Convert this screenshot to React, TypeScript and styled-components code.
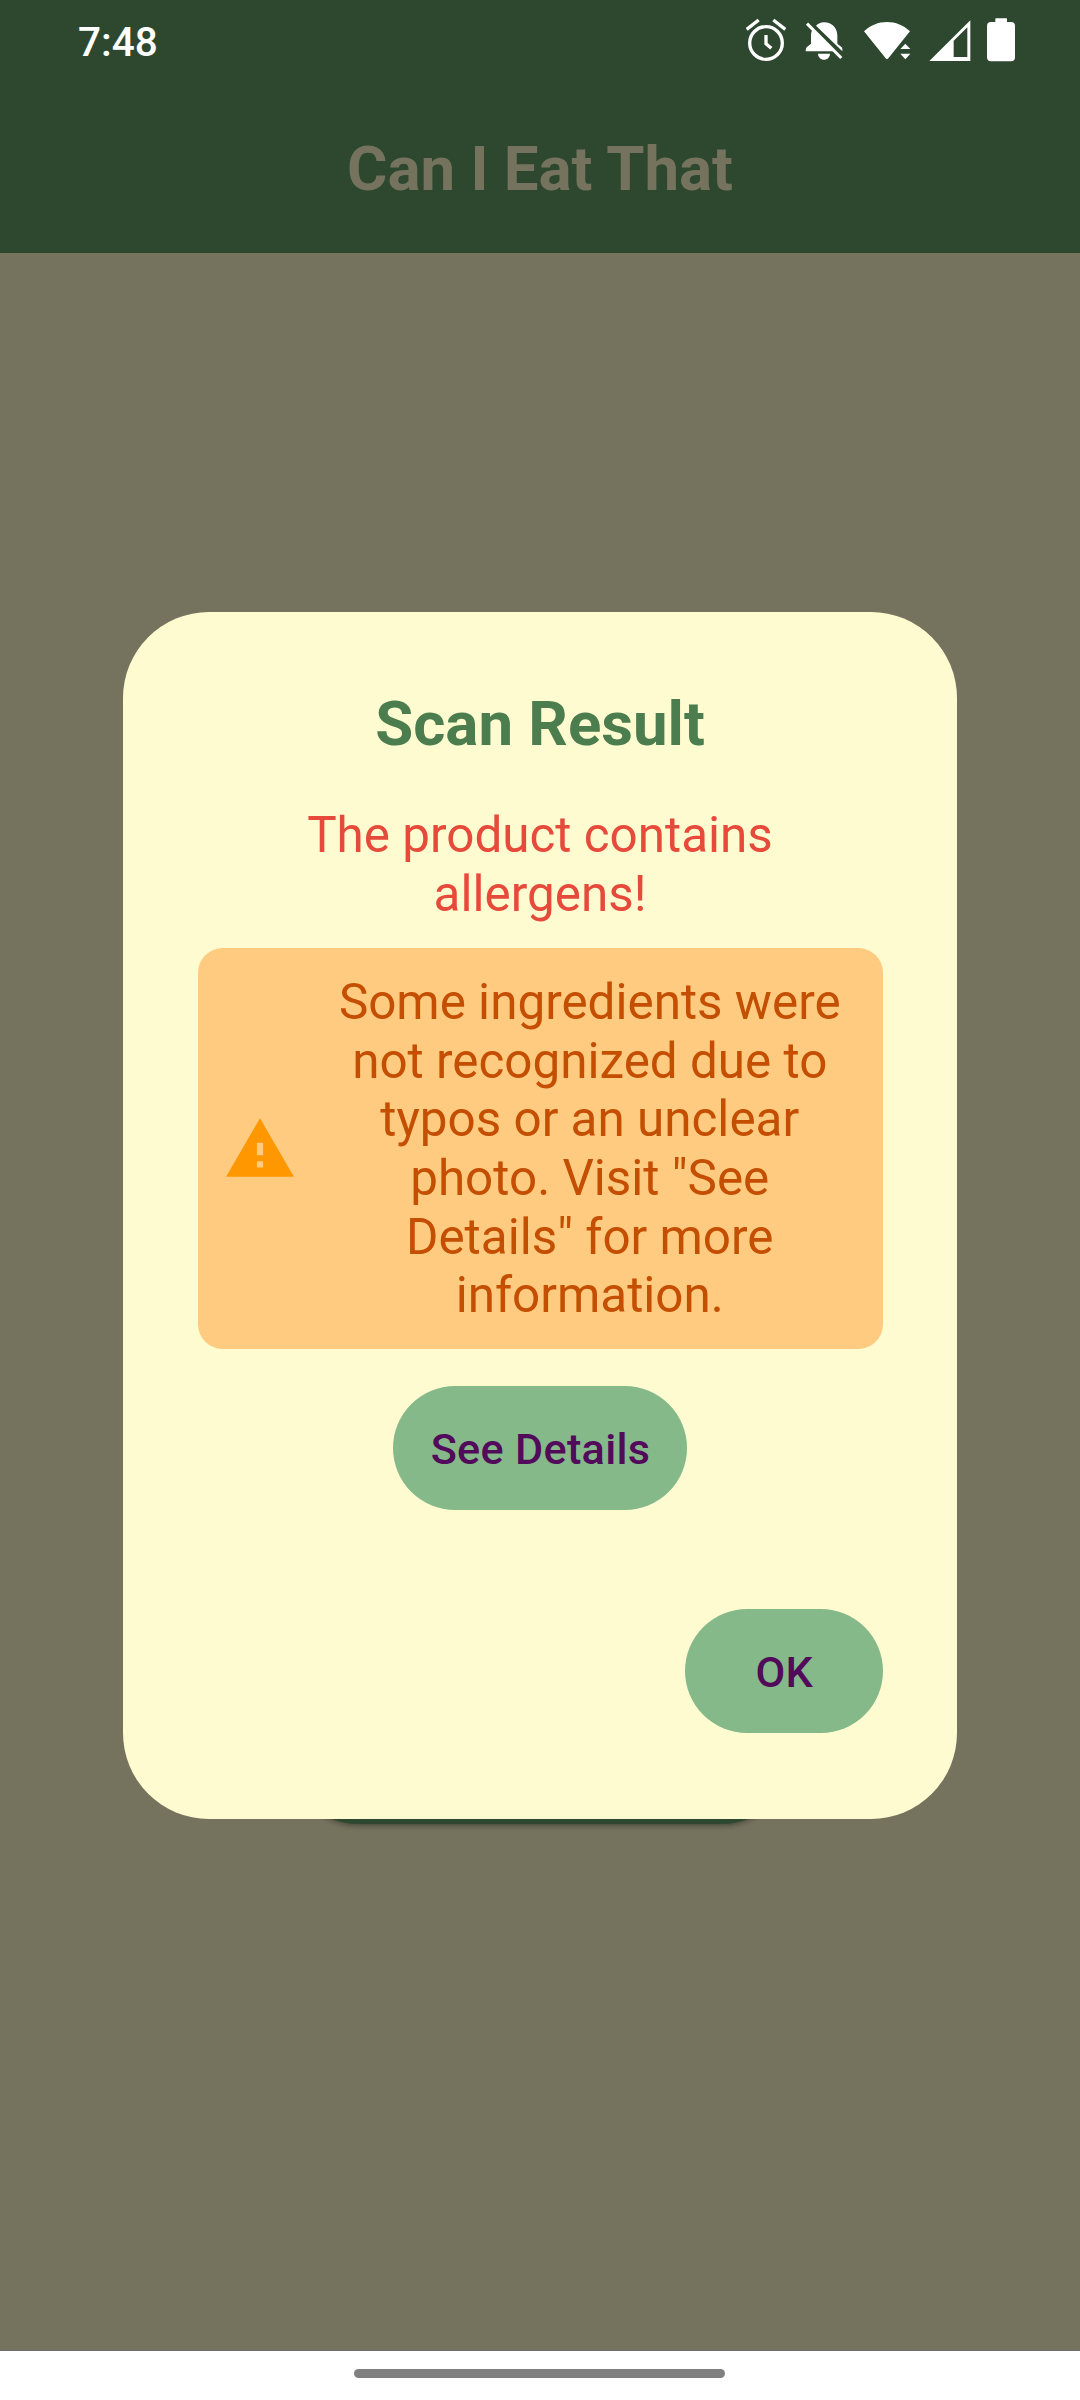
import React from "react";
import styled, { createGlobalStyle } from "styled-components";

const GlobalStyle = createGlobalStyle`
  *, *::before, *::after { box-sizing: border-box; }
  body { margin: 0; font-family: Roboto, "Noto Sans", sans-serif; }
  button { font-family: inherit; border: 0; margin: 0; }
`;

const Screen = styled.div`
  position: relative;
  width: 1080px;
  height: 2400px;
  display: flex;
  flex-direction: column;
  overflow: hidden;
  background: #75735e;
`;

const TopBar = styled.header`
  height: 253px;
  flex: none;
  display: flex;
  flex-direction: column;
  background: #2e482f;
`;

const StatusBar = styled.div`
  height: 84px;
  display: flex;
  align-items: center;
  justify-content: space-between;
  padding: 0 64px 0 78px;
`;

const Clock = styled.span`
  font-size: 40.5px;
  font-weight: 500;
  line-height: 48px;
  color: #fff;
`;

const StatusIcons = styled.div`
  display: flex;
  align-items: center;
  height: 84px;
`;

const StatusIcon = styled.svg<{ $gap?: number }>`
  display: block;
  height: 84px;
  margin-left: ${(p) => p.$gap ?? 0}px;
`;

const AppTitle = styled.h1`
  margin: 0;
  padding-top: 49px;
  text-align: center;
  font-size: 61.75px;
  font-weight: 700;
  line-height: 72px;
  color: #75735e;
`;

const Content = styled.main`
  flex: 1;
  display: flex;
  justify-content: center;
  align-items: flex-start;
  padding-top: 1447px;
  border-bottom: 2px solid #757066;
`;

const ScanButton = styled.div`
  width: 490px;
  height: 124px;
  border-radius: 62px;
  background: #2e482f;
  box-shadow: 0 2px 5px rgba(0, 0, 0, 0.35);
`;

const NavBar = styled.footer`
  height: 49px;
  flex: none;
  display: flex;
  justify-content: center;
  padding: 18px 1px 0 0;
  background: #fff;
`;

const NavHandle = styled.div`
  width: 371px;
  height: 9px;
  border-radius: 5px;
  background: #808080;
`;

const Overlay = styled.div`
  position: absolute;
  inset: 0;
  display: flex;
  justify-content: center;
  align-items: flex-start;
  padding-top: 612px;
`;

const Dialog = styled.section`
  width: 834px;
  height: 1207px;
  display: flex;
  flex-direction: column;
  padding: 74px 74.5px 86px;
  border-radius: 86px;
  background: #fffbd0;
`;

const DialogTitle = styled.h2`
  margin: 0 0 44px;
  text-align: center;
  font-size: 61.75px;
  font-weight: 700;
  line-height: 76px;
  color: #4b7d4e;
`;

const Message = styled.p<{ $color: string }>`
  margin: 0;
  flex: 1;
  text-align: center;
  font-size: 49.4px;
  line-height: 58.67px;
  color: ${(p) => p.$color};
`;

const Alert = styled.div`
  padding: 0 70px;
  display: flex;
  flex: none;
`;

const Warning = styled.div`
  display: flex;
  align-items: center;
  gap: 24.7px;
  margin-top: 24.6px;
  padding: 25px 24.7px 24.4px 25.5px;
  border-radius: 24.7px;
  background: #ffcb80;
`;

const WarningIcon = styled.svg`
  width: 74px;
  height: 74px;
  flex: none;
`;

const PillButton = styled.button<{ $width: number; $align: string; $top: number }>`
  align-self: ${(p) => p.$align};
  flex: none;
  width: ${(p) => p.$width}px;
  height: 124px;
  margin-top: ${(p) => p.$top}px;
  padding: 2px 0 0 1px;
  border-radius: 62px;
  background: #86b98a;
  color: #520a5b;
  font-size: 43.2px;
  font-weight: 500;
  letter-spacing: 0.3px;
`;

function AlarmIcon() {
  return (
    <StatusIcon viewBox="78 0 120 252" width={40} fill="none" stroke="#fff" strokeWidth={10}>
      <circle cx="138" cy="129" r="49" />
      <path d="M80 88 116 60M196 88 160 60M138 105V131L154 145" />
    </StatusIcon>
  );
}

function BellOffIcon() {
  return (
    <StatusIcon viewBox="255 0 114 252" width={38} $gap={19} fill="#fff">
      <path d="M288 77C294 71 302 67 312 67C336 67 352 84 352 107V131L365 142Q367 144 367 148V154Z" />
      <path d="M277 89C274 95 273 101 273 108V131L260 142Q257 145 257 154H346Z" />
      <path d="M294 161H330C330 171 322 179 312 179S294 171 294 161Z" />
      <path d="M261 71 364 174" stroke="#fff" strokeWidth="9" />
    </StatusIcon>
  );
}

function WifiIcon() {
  return (
    <StatusIcon viewBox="432 0 141 252" width={47} $gap={21} fill="#fff">
      <path d="M432 94C451 76 475 66 501 66S551 76 570 94L505 175Q501 180 497 175Z" />
      <path d="M541 147 556 131 571 147ZM541 161H571L556 178Z" />
    </StatusIcon>
  );
}

function SignalIcon() {
  return (
    <StatusIcon viewBox="627 0 126 252" width={42} $gap={18} fill="#fff">
      <path fillRule="evenodd" d="M628 183 751 61V183ZM701 122V171H742V82Z" />
    </StatusIcon>
  );
}

function BatteryIcon() {
  return (
    <StatusIcon viewBox="801 0 87 252" width={29} $gap={16} fill="#fff">
      <rect x="826" y="55" width="35" height="20" rx="2" />
      <rect x="801" y="66" width="84" height="118" rx="12" />
    </StatusIcon>
  );
}

export default function App() {
  return (
    <>
      <GlobalStyle />
      <Screen>
        <TopBar>
          <StatusBar>
            <Clock>7:48</Clock>
            <StatusIcons>
              <AlarmIcon />
              <BellOffIcon />
              <WifiIcon />
              <SignalIcon />
              <BatteryIcon />
            </StatusIcons>
          </StatusBar>
          <AppTitle>Can I Eat That</AppTitle>
        </TopBar>
        <Content>
          <ScanButton />
        </Content>
        <NavBar>
          <NavHandle />
        </NavBar>
        <Overlay>
          <Dialog role="dialog">
            <DialogTitle>Scan Result</DialogTitle>
            <Alert>
              <Message $color="#e64a3a">The product contains allergens!</Message>
            </Alert>
            <Warning>
              <WarningIcon viewBox="0 0 24 24" fill="#ff9800">
                <path d="M1 21h22L12 2 1 21zm12-3h-2v-2h2v2zm0-4h-2v-4h2v4z" />
              </WarningIcon>
              <Message $color="#c44e02">
                Some ingredients were not recognized due to typos or an unclear photo. Visit "See
                Details" for more information.
              </Message>
            </Warning>
            <PillButton $width={294} $align="center" $top={37}>
              See Details
            </PillButton>
            <PillButton $width={197.5} $align="flex-end" $top={99}>
              OK
            </PillButton>
          </Dialog>
        </Overlay>
      </Screen>
    </>
  );
}
